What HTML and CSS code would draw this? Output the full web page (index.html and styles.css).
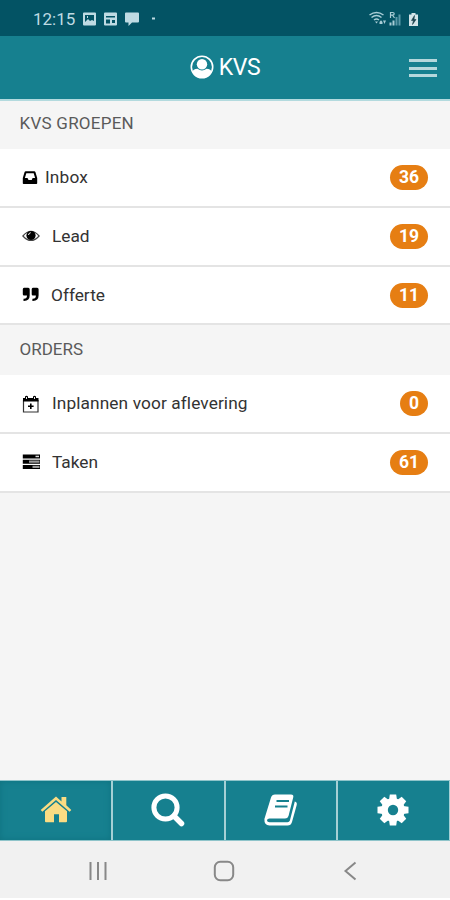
FILE: index.html
```
<!DOCTYPE html>
<html lang="nl">
<head>
<meta charset="utf-8">
<meta name="viewport" content="width=device-width, initial-scale=1">
<title>KVS</title>
<link rel="stylesheet" href="styles.css">
</head>
<body>
<div class="status">
  <span class="time">12:15</span>
  <svg class="notices" width="76" height="16" viewBox="0 0 76 16" fill="#bfdbe3">
    <path fill-rule="evenodd" d="M2 1.500h11q1 0 1 1v11q0 1-1 1H2q-1 0-1-1v-11q0-1 1-1zM3 4v7l3-3 2 2 2-1 2 1V4zM5 5h1v2H5z"/>
    <path fill-rule="evenodd" d="M23 1.500h11q1 0 1 1v11q0 1-1 1H23q-1 0-1-1v-11q0-1 1-1zM24 5v1.500h9V5zM24 8.500v4h4v-4zM30 9v3h3V9z"/>
    <path d="M44 1.500h12q1 0 1 1v8q0 1-1 1h-6l-3.500 3.500v-3.500H44q-1 0-1-1v-8q0-1 1-1z"/>
    <rect x="70" y="6.500" width="3" height="2"/>
  </svg>
  <svg class="signals" width="52" height="18" viewBox="0 0 52 18" fill="none" stroke="#a9cdd6">
    <path d="M1.500 5q7-5 14 0M3.500 7.500q5-4 10 0M6 10q2.500-2 5 0" stroke-width="1.500"/>
    <path d="M7 11.500h3l-1.500 2zM11.500 12l1.500-1.800 1.500 1.800v2h-3zM15 10.500h3L16.500 14z" fill="#a9cdd6" stroke="none"/>
    <path d="M22.500 8V2.500h2.200q1.500 0 1.500 1.300t-1.500 1.400h-2.200M24.500 5.200L26.500 8" stroke-width="1.200"/>
    <path d="M22.500 15.500v-3M25.500 15.500v-5" stroke-width="2"/>
    <path d="M28.500 15.500V7M31.500 15.500V4.500" stroke-width="2" stroke="#5b99a8"/>
    <path d="M41 4.500h2.500V3h4v1.500H50v11.500h-9z" fill="#d3e4e8" stroke="none"/>
    <path d="M46.500 5.500l-3 5h2l-1 4 3.500-5h-2z" fill="#173f4b" stroke="#173f4b" stroke-width=".6"/>
  </svg>
</div>
<header class="header">
  <div class="brand">
    <svg width="24" height="24" viewBox="0 0 24 24">
      <defs><clipPath id="disc"><circle cx="12" cy="12" r="11"/></clipPath></defs>
      <circle cx="12" cy="12" r="10.700" fill="none" stroke="#fff" stroke-width="1.600"/>
      <g clip-path="url(#disc)" fill="#fff"><circle cx="12" cy="9.300" r="5.200"/><path d="M2 24v-7q1-3 5.500-3.300 4.500 3.500 9 0 4.500.3 5.500 3.300v7z"/></g>
    </svg>
    <h1>KVS</h1>
  </div>
  <div class="menu"><i></i><i></i><i></i></div>
</header>
<main>
  <h2>KVS GROEPEN</h2>
  <ul>
    <li><svg width="18" height="18" viewBox="0 0 18 18"><path fill-rule="evenodd" d="M3.700 2.300h8.600q.8 0 1.100.8L15.200 9v5.200q0 .8-.8.800H1.600q-.8 0-.8-.8V9l1.800-5.900q.3-.8 1.100-.8zM4.300 4.300L2.900 9h2.600l1 2h3.200l.9-2h2.500l-1.400-4.700z"/></svg><span class="name inbox">Inbox</span><b>36</b></li>
    <li><svg width="18" height="18" viewBox="0 0 18 18"><path d="M.9 9Q9-.5 17.100 9 9 18 .9 9z" fill="none" stroke="#444" stroke-width="1.200"/><circle cx="9" cy="8.500" r="4.600"/><path d="M6.500 8Q6.700 6 8.700 5.700" fill="none" stroke="#fff"/></svg><span class="name lead">Lead</span><b>19</b></li>
    <li><svg width="18" height="18" viewBox="0 0 18 18"><path id="q" d="M2 1.800h4.200q1.500 0 1.500 1.500v6q0 5.700-5.700 5.700h-.5v-2.200H2q3 0 3-3.300H2Q.8 9.500.8 8.200V3.300Q.8 1.800 2 1.800z"/><use href="#q" x="8.900"/></svg><span class="name offerte">Offerte</span><b>11</b></li>
  </ul>
  <h2>ORDERS</h2>
  <ul>
    <li><svg width="18" height="18" viewBox="0 0 18 18"><path d="M1.500 5v12h14.500V5" fill="none" stroke="#333" stroke-width="1.200"/><path d="M1 6.500V3h2V1.500q1.500-1.500 3 0V3h5V1.500q1.500-1.500 3 0V3h2.500v3.500zM8 8.500h1.600v2h2v1.600h-2v2H8v-2H6v-1.600h2z"/><path d="M4.500 2v2M12.500 2v2" stroke="#fff" stroke-width=".9"/></svg><span class="name plan">Inplannen voor aflevering</span><b>0</b></li>
    <li><svg width="18" height="18" viewBox="0 0 18 18"><path d="M.8 1.500H18v4H.8zM.8 6.700H18v4H.8zM.8 11.900H18v4H.8z"/><path d="M13.500 2.700H17v1.500h-3.500z" fill="#ddd"/><path d="M7 7.500h10.500v2.200H7zM10.500 12.700h7v2.200h-7z" fill="#999"/></svg><span class="name taken">Taken</span><b>61</b></li>
  </ul>
</main>
<nav class="tabs">
  <div class="tab active"><svg width="34" height="34" viewBox="0 4 34 34" fill="#fbdc83"><path d="M17 7.500l5.500 5V8h4.800v8.300l5 4.600-1.700 1.800L17 11 3.400 22.700l-1.700-1.800z"/><path d="M17 13l11 9.300v10q0 1-1 1h-7v-8h-5v8H7q-1 0-1-1v-10z"/></svg></div>
  <div class="tab"><svg width="36" height="36" viewBox="0 0 36 36" fill="none" stroke="#fff"><circle cx="15.500" cy="15.500" r="11.600" stroke-width="5"/><path d="M24 24l7.500 7.500" stroke-width="5.500" stroke-linecap="round"/></svg></div>
  <div class="tab"><svg width="36" height="36" viewBox="0 0 36 36"><path d="M12 2.500h16q3 0 2.200 3L25.500 24q-.8 2.500-3.500 2.500H6.500Q4 26.500 4 28.500q.2 1.800 2.500 1.800h18q1.800 0 2.400-1.800L31.800 9.500q2.600.6 1.900 3.500L29 30q-1 3.500-4.500 3.500H6.500Q1 33.200 1.400 27L8 5.500q.9-3 4-3z" fill="#fff"/><path d="M13.500 9H26M12 14.500h12.500" stroke="#16808f" stroke-width="2.200"/></svg></div>
  <div class="tab"><svg width="36" height="36" viewBox="-18 -18 36 36" fill="#fff"><g id="teeth"><path id="tooth" d="M-4-10l.8-5.500h6.400L4-10V10l-.8 5.500h-6.400L-4 10z"/><use href="#tooth" transform="rotate(90)"/></g><use href="#teeth" transform="rotate(45)"/><circle r="11.800"/><circle r="5.200" fill="#16808f"/></svg></div>
</nav>
<footer class="system">
  <svg width="22" height="22" viewBox="0 0 22 22"><path d="M3.500 2v18M11 2v18M18.500 2v18"/></svg>
  <svg width="22" height="22" viewBox="0 0 22 22"><rect x="1.800" y="1.800" width="18.400" height="18.400" rx="5.500"/></svg>
  <svg width="22" height="22" viewBox="0 0 22 22"><path d="M16.500 2.500L6.500 11l10 8.500"/></svg>
</footer>
</body>
</html>
```
FILE: styles.css
```
* { box-sizing: border-box; }
body { margin: 0; width: 450px; height: 900px; display: flex; flex-direction: column; background: #f5f5f5; font-family: Roboto, sans-serif; color: #333; overflow: hidden; }
h1, h2, ul { margin: 0; padding: 0; font-weight: 400; list-style: none; }
svg { display: block; flex: none; }
.status { height: 36px; background: #035364; display: flex; align-items: center; padding: 2px 30px 0 33px; }
.time { color: #bfdbe3; font-size: 17px; width: 49px; line-height: 20px; }
.signals { margin-left: auto; }
.header { height: 65px; background: #16808f; border-bottom: 2px solid #b3dade; display: grid; grid-template-columns: 1fr auto 1fr; align-items: center; }
.brand { grid-column: 2; display: flex; align-items: center; gap: 5px; }
.brand svg { position: relative; top: -1px; }
.brand h1 { color: #fff; font-size: 23px; line-height: 28px; letter-spacing: -.4px; }
.menu { justify-self: end; width: 28px; margin-right: 13px; display: grid; gap: 4.500px; padding-top: 1px; }
.menu i { height: 3px; background: #b5d8dc; }
h2 { height: 48.400px; padding: 0 19.500px; font-size: 17px; line-height: 44px; color: #5a5a5a; letter-spacing: .25px; }
ul + h2 { height: 50px; line-height: 49px; letter-spacing: 0; }
ul { background: #fff; }
li { height: 58.660px; border-bottom: 2px solid #e4e4e4; padding: 0 22px; display: flex; align-items: center; }
.name { font-size: 17.300px; line-height: 24px; margin-top: -1px; color: #333; padding-left: 12px; }
.name.inbox { padding-left: 5px; letter-spacing: .15px; }
.name.offerte { padding-left: 11px; }
.name.plan { letter-spacing: .1px; }
li b { margin-left: auto; min-width: 27.500px; height: 25px; padding: 0 9px; border-radius: 13px; background: #e67e13; color: #fff; font-size: 17.500px; line-height: 24.500px; text-align: center; }
.tabs { margin-top: auto; height: 61px; padding-left: 1px; background: #16808f; display: grid; grid-template-columns: repeat(4, 1fr); border-top: 1px solid #8fc4ca; border-bottom: 1px solid #8fc4ca; }
.tab { display: grid; place-items: center; padding-bottom: 2px; border-right: 2px solid #a5d0d5; }
.tab:last-child { border-right-width: 1px; }
.tab.active { margin-left: -1px; padding-left: 1px; box-shadow: inset 0 0 6px #0f7280; }
.system { height: 59px; background: #f1f1f1; border-bottom: 2px solid #fff; display: flex; gap: 104px; align-items: center; padding: 3px 0 0 87px; }
.system svg { fill: none; stroke: #888; stroke-width: 2; }
```
